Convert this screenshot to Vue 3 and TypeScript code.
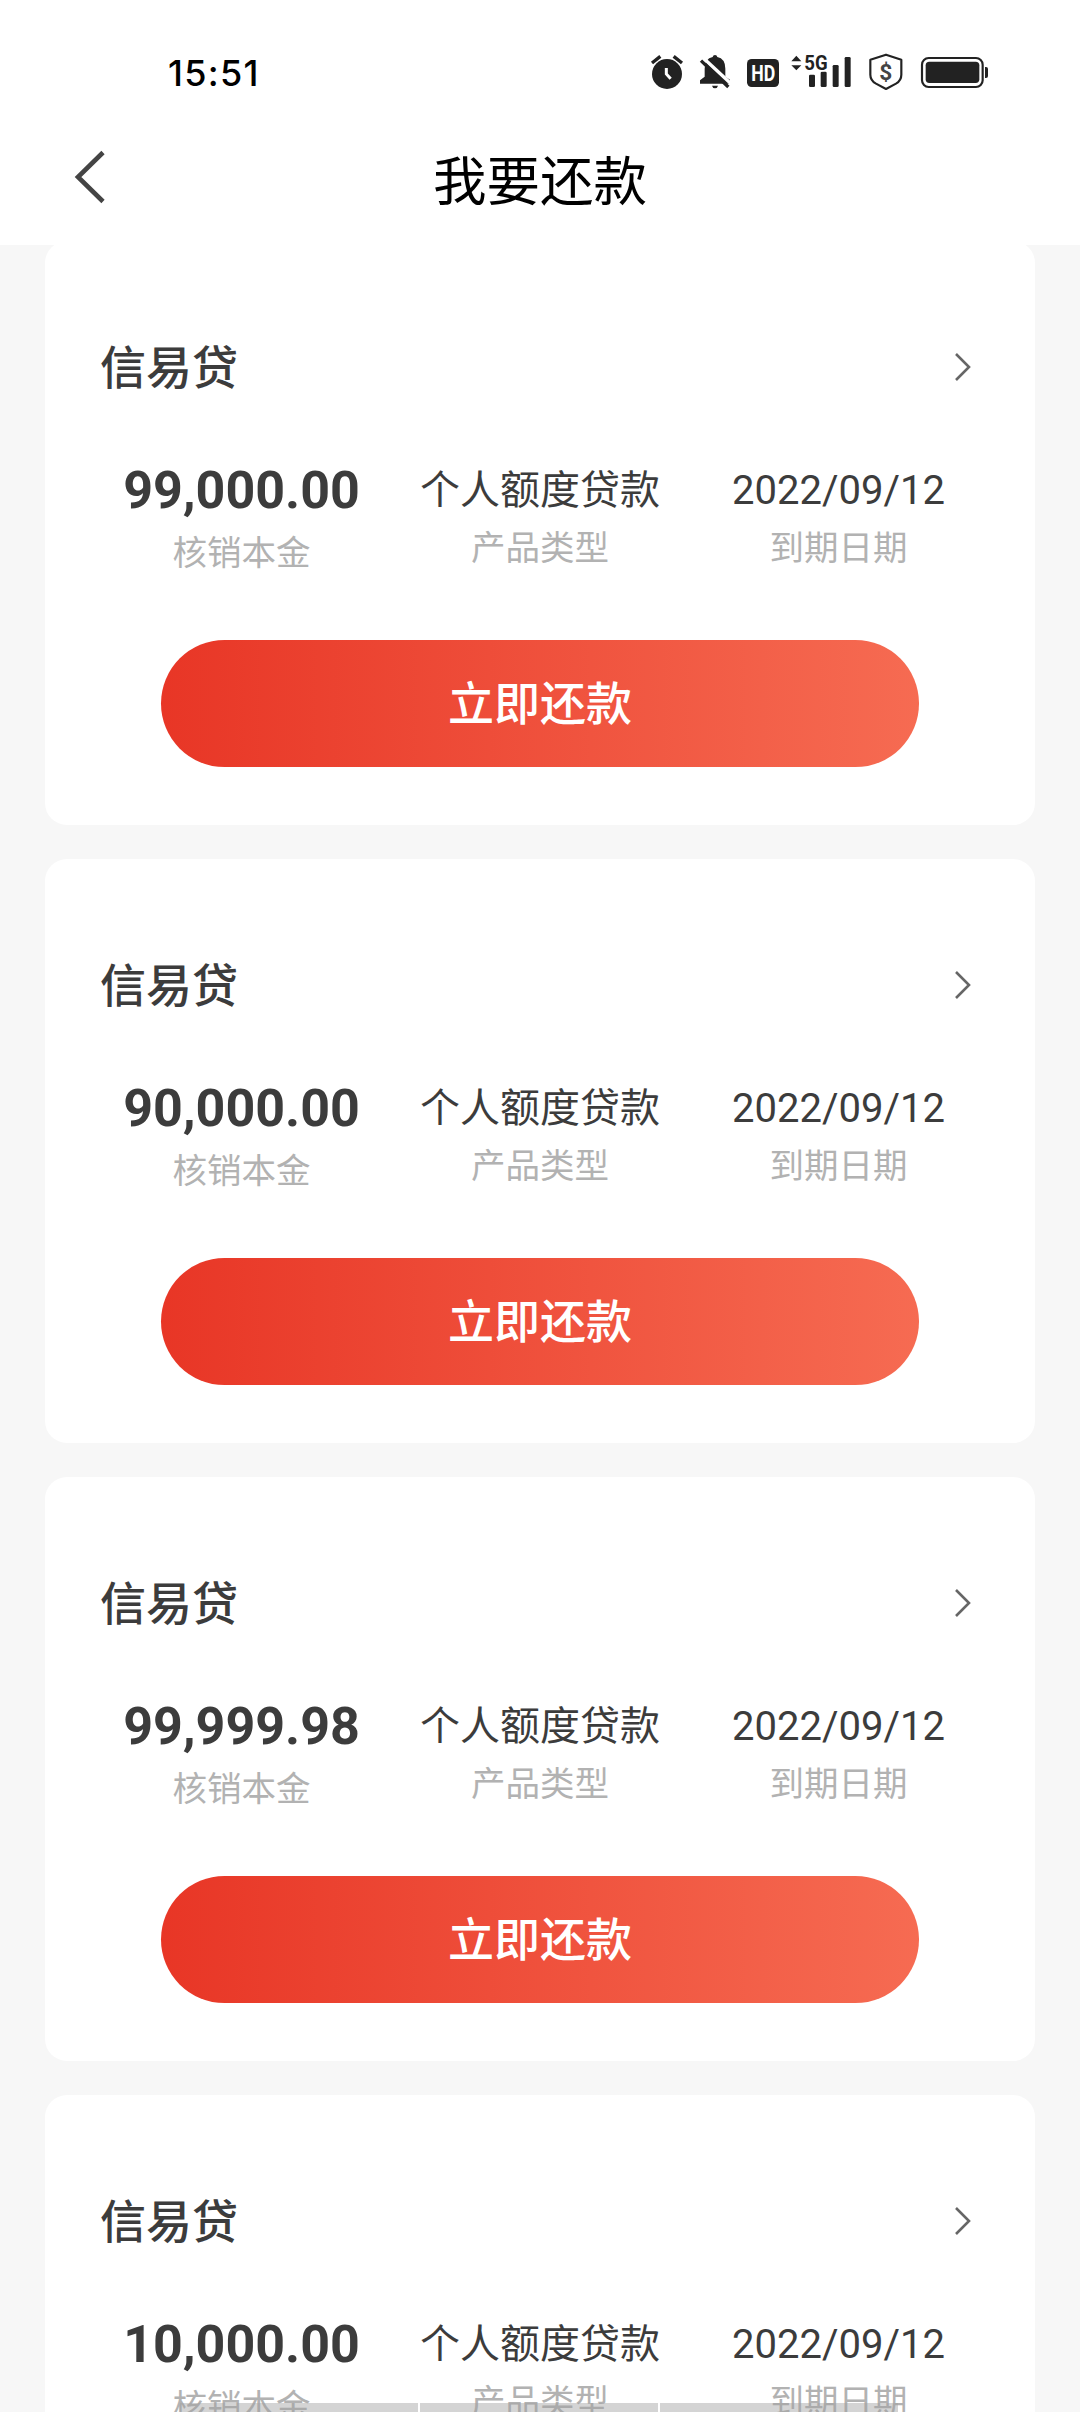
<script setup lang="ts">
interface Loan {
  name: string
  amount: string
  type: string
  due: string
}

const loans: Loan[] = [
  { name: '信易贷', amount: '99,000.00', type: '个人额度贷款', due: '2022/09/12' },
  { name: '信易贷', amount: '90,000.00', type: '个人额度贷款', due: '2022/09/12' },
  { name: '信易贷', amount: '99,999.98', type: '个人额度贷款', due: '2022/09/12' },
  { name: '信易贷', amount: '10,000.00', type: '个人额度贷款', due: '2022/09/12' },
]
</script>

<template>
  <div class="screen">
    <header class="top">
      <div class="status">
        <span class="time">15:51</span>
        <svg class="indicators" width="400" height="90" viewBox="0 0 1200 270">
          <!-- alarm clock -->
          <g>
            <circle cx="141" cy="132" r="45" fill="#222" />
            <path d="M96 99L121 79M186 99L161 79" stroke="#222" stroke-width="10" fill="none" />
            <path d="M139 114V132L152 146" stroke="#fff" stroke-width="9" fill="none" />
          </g>
          <!-- muted bell -->
          <g>
            <path d="M240 161V151L254 140V116Q254 86 278 81Q279 75 285 75Q291 75 292 81Q316 86 316 116V140L330 149V161Z" fill="#222" />
            <path d="M276 167H294Q292 175 285 175Q278 175 276 167Z" fill="#222" />
            <path d="M250 84L334 162" stroke="#fff" stroke-width="10" fill="none" />
            <path d="M243 92L325 171" stroke="#222" stroke-width="10" fill="none" />
          </g>
          <!-- HD badge -->
          <rect x="381" y="87" width="96" height="84" rx="14" fill="#222" />
          <text x="430" y="152" class="hd" textLength="72" lengthAdjust="spacingAndGlyphs">HD</text>
          <!-- data arrows and signal -->
          <path d="M514 94L529 77L544 94ZM514 106L529 121L544 106Z" fill="#222" />
          <rect x="567" y="134" width="18" height="37" rx="4" fill="#222" />
          <rect x="602" y="125" width="18" height="46" rx="4" fill="#222" />
          <rect x="638" y="105" width="18" height="66" rx="4" fill="#222" />
          <rect x="674" y="81" width="18" height="90" rx="4" fill="#222" />
          <text x="588" y="121" class="net" textLength="70" lengthAdjust="spacingAndGlyphs">5G</text>
          <!-- payment shield -->
          <path d="M798 74L844 89V134Q844 151 828 161L798 177L768 161Q751 151 751 134V89Z" fill="none" stroke="#222" stroke-width="6.5" stroke-linejoin="round" />
          <text x="797" y="149" class="dollar">$</text>
          <!-- battery -->
          <rect x="906" y="84" width="182" height="87" rx="20" fill="none" stroke="#222" stroke-width="6.5" />
          <rect x="917" y="95" width="161" height="64" rx="11" fill="#222" />
          <path d="M1095 111H1098Q1104 111 1104 117V138Q1104 144 1098 144H1095Z" fill="#222" />
        </svg>
      </div>
      <div class="nav">
        <svg class="back" width="34" height="56" viewBox="0 0 34 56">
          <path d="M31 3.5L6 28L31 52.5" fill="none" stroke="#444" stroke-width="4.6" />
        </svg>
        <h1>我要还款</h1>
      </div>
    </header>

    <main class="list">
      <section v-for="(loan, i) in loans" :key="i" class="card">
        <div class="head">
          <h2>{{ loan.name }}</h2>
          <svg width="18" height="30" viewBox="0 0 18 30">
            <path d="M2 2L15 15L2 28" fill="none" stroke="#666" stroke-width="2.6" />
          </svg>
        </div>
        <div class="facts">
          <div class="fact">
            <strong>{{ loan.amount }}</strong>
            <small class="low">核销本金</small>
          </div>
          <div class="fact">
            <span>{{ loan.type }}</span>
            <small>产品类型</small>
          </div>
          <div class="fact">
            <span>{{ loan.due }}</span>
            <small>到期日期</small>
          </div>
        </div>
        <button class="pay" type="button">立即还款</button>
      </section>
    </main>

    <div class="keys"><i></i><i></i><i></i></div>
  </div>
</template>

<style>
body {
  margin: 0;
}
</style>

<style scoped>
.screen {
  position: relative;
  width: 1080px;
  height: 2412px;
  overflow: hidden;
  background: #f7f7f7;
  color: #3c3c3c;
  font-family: Roboto, 'Noto Sans CJK SC', sans-serif;
}

.top {
  position: relative;
  z-index: 1;
  height: 245px;
  background: #fff;
}

.status {
  display: flex;
  justify-content: space-between;
  align-items: flex-start;
  height: 120px;
  padding: 0 60px 0 168px;
}

.time {
  margin-top: 50px;
  color: #000;
  font: 500 36px/46px Inter, sans-serif;
  letter-spacing: 1.3px;
}

.indicators {
  margin-top: 30px;
}

.hd,
.net,
.dollar {
  font-family: Roboto, sans-serif;
  font-weight: 700;
  text-anchor: middle;
}

.hd {
  font-size: 66px;
  fill: #fff;
}

.net {
  font-size: 62px;
  fill: #222;
  stroke: #fff;
  stroke-width: 8px;
  paint-order: stroke;
}

.dollar {
  font-size: 68px;
  font-weight: 700;
  fill: #444;
}

.nav {
  display: grid;
  grid-template-columns: 120px 1fr 120px;
  align-items: start;
}

.back {
  margin: 29px 0 0 72px;
}

h1 {
  margin: 25px 0 0;
  color: #000;
  font-size: 53.5px;
  font-weight: 400;
  line-height: 76px;
  text-align: center;
}

.list {
  display: flex;
  flex-direction: column;
  gap: 34px;
  margin: -4px 45px 0;
}

.card {
  box-sizing: border-box;
  flex: none;
  height: 584px;
  padding: 92px 55px 0;
  border-radius: 22px;
  background: #fff;
}

.head {
  display: flex;
  justify-content: space-between;
  align-items: center;
  height: 68px;
  padding-right: 8px;
}

h2 {
  margin: 0;
  padding-top: 2px;
  font-size: 46px;
  font-weight: 500;
  line-height: 68px;
}

.facts {
  display: grid;
  grid-template-columns: repeat(3, 298.5px);
  height: 239px;
  margin: 0 -8px;
  padding-top: 59px;
  box-sizing: border-box;
  justify-content: center;
}

.fact {
  display: flex;
  flex-direction: column;
  align-items: center;
}

.fact strong {
  font-size: 52px;
  font-weight: 700;
  line-height: 62px;
}

.fact span {
  font-size: 40px;
  line-height: 62px;
}

.fact small {
  margin-top: -2px;
  color: #b2b2b2;
  font-size: 34.5px;
  line-height: 56px;
}

.fact .low {
  margin-top: 3px;
}

.pay {
  display: block;
  width: 758px;
  height: 127px;
  margin: 0 auto;
  padding: 0 0 8px;
  border: 0;
  border-radius: 64px;
  background: linear-gradient(90deg, #e83626, #f66b52);
  color: #fff;
  font: 500 46px Roboto, 'Noto Sans CJK SC', sans-serif;
}

/* gesture hints lying over the bottom edge */
.keys {
  position: absolute;
  bottom: 0;
  left: 180px;
  display: flex;
  gap: 2px;
  width: 718px;
  height: 9px;
}

.keys i {
  flex: 1;
  background: rgba(160, 160, 160, 0.45);
}
</style>
